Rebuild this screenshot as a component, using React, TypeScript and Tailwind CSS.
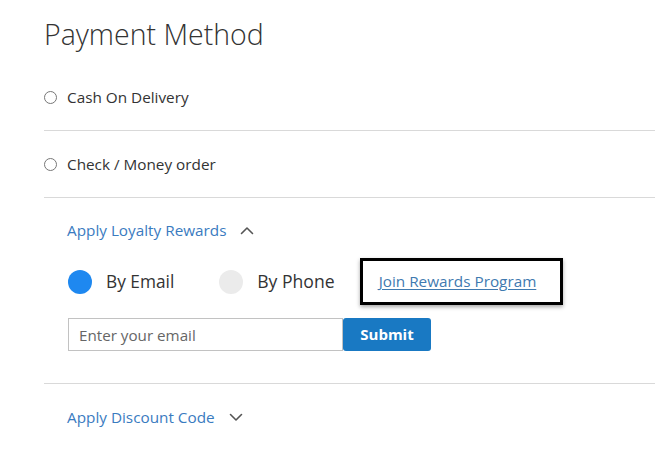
import React from 'react'

const Chevron = ({ up }: { up?: boolean }) => (
  <svg width="14" height="9" viewBox="0 0 14 9" fill="none" className="ml-[14px]">
    <path
      d={up ? 'M1.5 7.5L7 2l5.5 5.5' : 'M1.5 1.5L7 7l5.5-5.5'}
      stroke="#555"
      strokeWidth="1.6"
      strokeLinecap="round"
      strokeLinejoin="round"
    />
  </svg>
)

const MethodRow = ({ label }: { label: string }) => (
  <div className="flex items-center h-[67px] border-b border-[#d9d9d9]">
    <span className="w-[13px] h-[13px] rounded-full border border-[#777] bg-white" />
    <span className="ml-[10px] text-[15.3px] text-[#333]">{label}</span>
  </div>
)

export default function App() {
  return (
    <div
      className="w-[655px] h-[462px] bg-white overflow-hidden pl-[44px]"
      style={{ fontFamily: '"Open Sans", sans-serif' }}
    >
      <h1 className="pt-[14px] text-[28.5px] font-light text-[#333] leading-[40px]">Payment Method</h1>

      <div className="mt-[10px]">
        <MethodRow label="Cash On Delivery" />
        <MethodRow label="Check / Money order" />
      </div>

      {/* Loyalty rewards */}
      <div className="border-b border-[#d9d9d9] pl-[23px] pb-[32px]">
        <div className="flex items-center h-[64px] text-[15.3px] text-[#3a7bbf]">
          Apply Loyalty Rewards
          <Chevron up />
        </div>

        <div className="flex items-center -mt-[4px]">
          <span className="w-[24px] h-[24px] rounded-full bg-[#1e88f0] ml-[1px]" />
          <span className="ml-[14px] text-[17.3px] text-[#333]">By Email</span>
          <span className="w-[24px] h-[24px] rounded-full bg-[#ebebeb] ml-[45px]" />
          <span className="ml-[14px] text-[17.6px] text-[#333]">By Phone</span>
          <div className="ml-[25px] border-[3px] border-black w-[203px] h-[47px] flex items-center pl-[16px] shadow-[0_2px_4px_rgba(0,0,0,0.35)]">
            <a href="#" className="text-[15.3px] text-[#3f7ab0] underline underline-offset-2">
              Join Rewards Program
            </a>
          </div>
        </div>

        <div className="flex mt-[13px] ml-[1px]">
          <input
            placeholder="Enter your email"
            className="w-[275px] h-[33px] border border-[#c2c2c2] px-[10px] text-[15.2px] placeholder:text-[#666] outline-none"
          />
          <button className="w-[88px] h-[33px] rounded-[3px] bg-[#1979c3] text-white font-bold text-[15px]">
            Submit
          </button>
        </div>
      </div>

      <div className="flex items-center h-[66px] pl-[23px] text-[15.3px] text-[#3a7bbf]">
        Apply Discount Code
        <Chevron />
      </div>
    </div>
  )
}
